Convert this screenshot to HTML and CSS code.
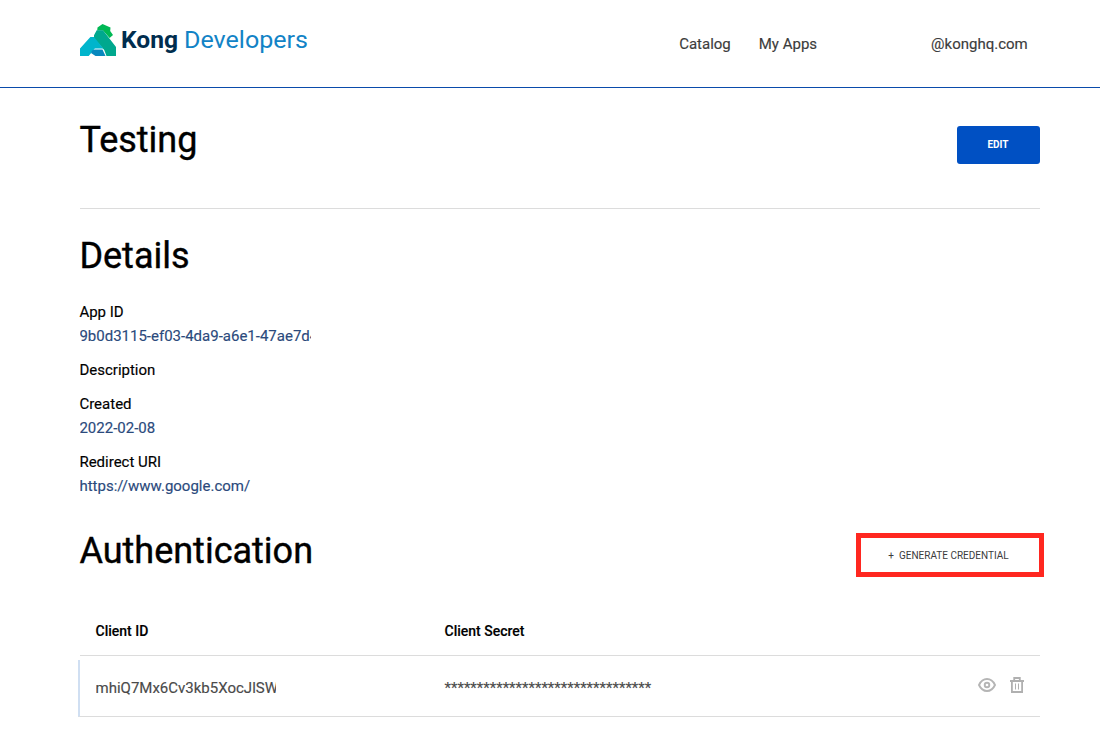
FILE: index.html
```html
<!DOCTYPE html>
<html lang="en">
<head>
<meta charset="utf-8">
<title>Kong Developers</title>
<link rel="stylesheet" href="styles.css">
</head>
<body>
<header class="header">
  <a class="brand">
    <svg width="230" height="40" viewBox="0 0 230 40">
      <path fill="#00b855" d="M17.500 7.500 22.500 4 30.500 7.500 30.200 11 33 15 29.600 18 23 10.400 17.200 10.400z"/>
      <path fill="#00a88e" d="M16.700 10.200 23 10.200 36 27 36 36 26.500 36 24.200 30 14 18.500 14 15.200z"/>
      <path fill="#00b5cc" d="M10.400 17 14 17 23.300 28.500 14.800 28.500 8.700 36 0 36 0 28.500z"/>
      <path fill="#0788bd" d="M12 30.500 14.500 29.500 22.500 29.500 25.500 36 15.500 36 11 33z"/>
      <text class="brand-name" x="41" y="28" textLength="57" lengthAdjust="spacingAndGlyphs">Kong</text>
      <text class="brand-sub" x="104" y="28" textLength="124" lengthAdjust="spacingAndGlyphs">Developers</text>
    </svg>
  </a>
  <nav class="nav"><a>Catalog</a><a>My Apps</a><a class="account">@konghq.com</a></nav>
</header>
<main class="main">
  <section class="title-row">
    <h1>Testing</h1>
    <button class="edit">EDIT</button>
  </section>
  <section class="details">
    <h2>Details</h2>
    <dl>
      <dt>App ID</dt><dd>9b0d3115-ef03-4da9-a6e1-47ae7d4</dd>
      <dt>Description</dt>
      <dt>Created</dt><dd>2022-02-08</dd>
      <dt>Redirect URI</dt><dd>https://www.google.com/</dd>
    </dl>
  </section>
  <section class="auth-row">
    <h2>Authentication</h2>
    <button class="generate"><span>+</span><span>GENERATE CREDENTIAL</span></button>
  </section>
  <div class="table">
    <div class="row head"><span class="id-cell">Client ID</span><span>Client Secret</span></div>
    <div class="row body">
      <span class="id-cell"><span class="client-id">mhiQ7Mx6Cv3kb5XocJlSW</span></span>
      <span>********************************</span>
      <span class="actions">
        <svg width="18" height="14" viewBox="0 0 18 14" fill="none" stroke="#b5b5b5" stroke-width="1.900"><path d="M1 7C3 2.700 5.800 1 9 1s6 1.700 8 6c-2 4.300-4.800 6-8 6S3 11.300 1 7z"/><circle cx="9" cy="7" r="2.300"/></svg>
        <svg width="14" height="16" viewBox="0 0 14 16" fill="none" stroke="#b0b0b0"><path stroke-width="1.800" d="M0 4h14M4.200 4V1h5.600v3M1.900 4v11h10.200V4"/><path d="M5.500 6.500v6M8.500 6.500v6"/></svg>
      </span>
    </div>
  </div>
</main>
</body>
</html>
```
FILE: styles.css
```css
* { box-sizing: border-box; }
body { margin: 0; background: #fff; color: #000; font: 15px/24px Roboto, sans-serif; -webkit-text-stroke: .15px currentColor; }
.header { display: flex; justify-content: space-between; align-items: flex-start; height: 88px; padding: 20px 72.3px 0 80px; border-bottom: 1px solid #0a4bab; }
.brand svg { display: block; }
.brand-name { font: 700 24px Roboto, sans-serif; fill: #002d4e; -webkit-text-stroke: 0; }
.brand-sub { font: 400 24px Roboto, sans-serif; fill: #1283c6; -webkit-text-stroke: 0; }
.nav { display: flex; gap: 28px; padding-top: 12px; color: #3c3c3c; }
.account { margin-left: 86px; }
.main { width: 960px; margin: 0 auto 0 80px; }
h1, h2 { margin: 0; font-size: 36px; line-height: 44px; font-weight: 400; text-indent: -.6px; -webkit-text-stroke-width: .4px; }
.title-row { display: flex; justify-content: space-between; align-items: flex-start; height: 121px; padding-top: 30px; border-bottom: 1px solid #dcdcdc; }
button { font-family: Roboto, sans-serif; font-size: 10px; line-height: 12px; -webkit-text-stroke: 0; }
.edit { width: 83px; height: 38px; margin-top: 8px; padding: 0 1px 0 0; border: 0; border-radius: 3px; background: #0050c3; color: #fff; font-weight: 700; }
.details { padding-top: 25px; }
dl { width: 231px; margin: 22px 0 0; }
dt, dd { margin: 0; height: 24px; text-indent: -.6px; }
dt + dt, dd + dt { margin-top: 10px; }
dd { overflow: hidden; color: #2b4a7c; white-space: nowrap; }
.auth-row { display: flex; justify-content: space-between; align-items: flex-start; margin-top: 31px; height: 78px; }
.generate { display: flex; justify-content: center; align-items: center; gap: 5px; width: 188px; height: 44px; margin: 4px -4px 0 0; padding: 2px 3px 0 0; border: 5px solid #ff2720; background: #fff; color: #3c3c3c; }
.row { display: flex; align-items: center; padding: 0 16px; border-bottom: 1px solid #dcdcdc; text-indent: -.5px; }
.id-cell { width: 349px; }
.head { height: 49px; font-size: 14px; font-weight: 500; }
.body { height: 57px; margin: 4px 0 0 -2px; border-left: 2px solid #d0dff2; color: #4a4a4a; }
.client-id { display: block; width: 180px; overflow: hidden; white-space: nowrap; }
.actions { display: flex; align-items: center; gap: 14px; margin: 0 0 6px auto; }
```
